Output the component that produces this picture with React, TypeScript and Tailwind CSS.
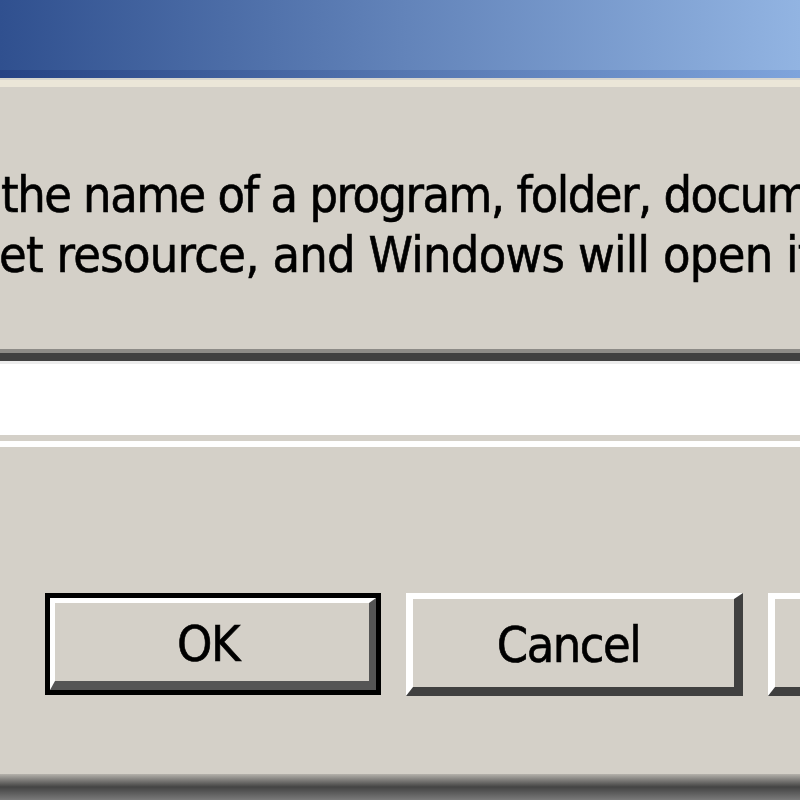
import React from "react";

export default function App() {
  const font = "font-['DejaVu_Sans_Condensed','DejaVu_Sans',sans-serif] [-webkit-text-stroke:0.6px_black]";
  return (
    <div className={`w-[800px] h-[800px] overflow-hidden bg-[#d4d0c8] flex flex-col ${font} text-black`}>
      {/* title bar */}
      <div className="h-[70px] shrink-0 bg-gradient-to-r from-[#30508f] via-[#6283b9] to-[#92b4e2]" />
      <div className="h-[8px] shrink-0 bg-gradient-to-r from-[#264284] via-[#5576b0] to-[#7fa4dc]" />
      <div className="h-[2px] shrink-0 bg-[#d8d6d0]" />
      <div className="h-[7px] shrink-0 bg-[#ebe6d8]" />

      {/* description text */}
      <div className="mt-[78px] text-[50px] leading-[60px] whitespace-nowrap overflow-hidden">
        <div className="ml-[1px] tracking-[-1.5px]">the name of a program, folder, document, or</div>
        <div className="ml-[-1px] tracking-[-0.7px]">et resource, and Windows will open it for you.</div>
      </div>

      {/* input */}
      <div className="mt-[64px] h-[98px] shrink-0 border-t-[4px] border-b-[6px] border-t-[#8d8b87] border-b-white">
        <div className="h-full border-t-[8px] border-b-[6px] border-t-[#404040] border-b-[#d4d0c8] bg-white">
          <div className="h-full border-t-[3px] border-t-[#ececec]" />
        </div>
      </div>

      {/* buttons */}
      <div className="mt-[146px] flex gap-[25px] pl-[45px] shrink-0">
        <div className="w-[336px] h-[102px] shrink-0 border-[5px] border-black">
          <div className="h-full border-t-[5px] border-l-[5px] border-r-[7px] border-b-[9px] border-t-white border-l-white border-r-[#555] border-b-[#555] bg-[#d4d0c8] flex items-center justify-center text-[50px] leading-none tracking-[-1.5px]">
            <span className="mt-[4px] mr-[8px]">OK</span>
          </div>
        </div>
        <div className="w-[337px] h-[103px] shrink-0 border-t-[6px] border-l-[7px] border-r-[9px] border-b-[9px] border-t-white border-l-white border-r-[#404040] border-b-[#404040] bg-[#d4d0c8] flex items-center justify-center text-[50px] leading-none tracking-[-1.5px]">
          <span className="mt-[4px] mr-[10px]">Cancel</span>
        </div>
        <div className="w-[337px] h-[103px] shrink-0 border-t-[6px] border-l-[7px] border-r-[9px] border-b-[9px] border-t-white border-l-white border-r-[#404040] border-b-[#404040] bg-[#d4d0c8]" />
      </div>

      {/* bottom frame */}
      <div className="mt-auto h-[26px] shrink-0 bg-gradient-to-b from-[#b5b2ac] via-[#444444] to-[#7a7a7a]" />
    </div>
  );
}
